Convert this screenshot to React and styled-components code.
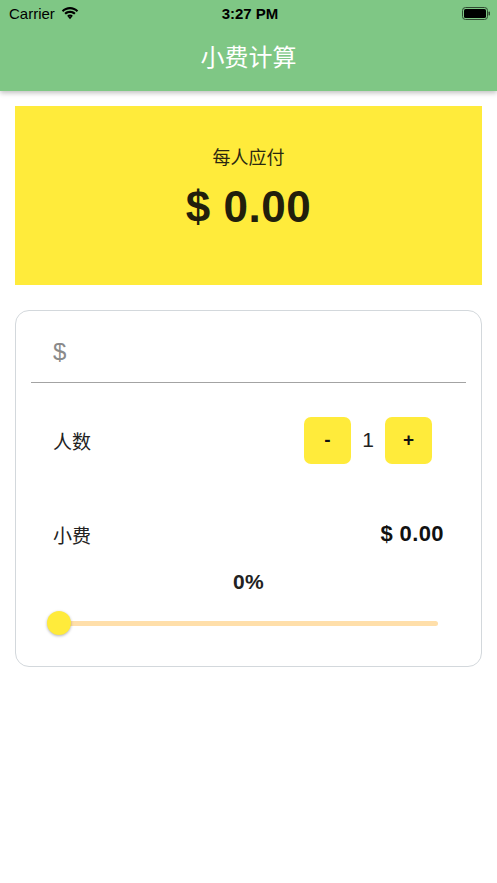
import React, { useState } from "react";
import styled, { createGlobalStyle } from "styled-components";

const GlobalStyle = createGlobalStyle`
  html, body {
    margin: 0;
    padding: 0;
    background: #ffffff;
  }
  body {
    font-family: "Liberation Sans", "Noto Sans CJK SC", sans-serif;
  }
  * {
    box-sizing: border-box;
  }
`;

const Page = styled.div`
  width: 497px;
  min-height: 883px;
  background: #ffffff;
`;

const Header = styled.header`
  background: #7fc785;
  box-shadow: 0 2px 5px rgba(0, 0, 0, 0.25);
  position: relative;
  z-index: 1;
`;

const StatusBar = styled.div`
  height: 26px;
  display: grid;
  grid-template-columns: 1fr auto 1fr;
  align-items: center;
  padding: 0 6px 0 9px;
  color: #000;
  font-size: 15px;
`;

const Carrier = styled.div`
  display: flex;
  align-items: center;
  gap: 6px;
`;

const Clock = styled.div`
  font-weight: bold;
`;

const BatteryWrap = styled.div`
  display: flex;
  justify-content: flex-end;
  align-items: center;
`;

const NavBar = styled.div`
  height: 65px;
  display: flex;
  align-items: center;
  justify-content: center;
  color: #fff;
  font-size: 24px;
  font-family: "Noto Sans CJK SC", sans-serif;
  padding-bottom: 6px;
`;

const Content = styled.main`
  padding: 15px 15px;
  display: flex;
  flex-direction: column;
  gap: 25px;
`;

const Summary = styled.section`
  background: #ffeb3b;
  height: 179px;
  display: flex;
  flex-direction: column;
  align-items: center;
  justify-content: center;
  padding-bottom: 14px;
`;

const SummaryLabel = styled.div`
  font-family: "Noto Sans CJK SC", sans-serif;
  font-size: 18px;
  line-height: 21px;
  color: #2b2810;
  margin-bottom: 14px;
`;

const SummaryAmount = styled.div`
  font-size: 44px;
  line-height: 51px;
  font-weight: bold;
  color: #221f0c;
  letter-spacing: 0.5px;
`;

const Card = styled.section`
  border: 1px solid #d3d8dc;
  border-radius: 14px;
  padding: 0 15px 20px;
  height: 357px;
`;

const InputRow = styled.label`
  display: flex;
  align-items: center;
  height: 72px;
  border-bottom: 1.5px solid #a3a3a3;
  padding: 10px 22px 0;
`;

const Dollar = styled.span`
  font-size: 24px;
  color: #8a8a8a;
  margin-right: 6px;
`;

const AmountInput = styled.input`
  flex: 1;
  border: none;
  outline: none;
  background: transparent;
  font-size: 22px;
  font-family: inherit;
`;

const Row = styled.div`
  display: flex;
  align-items: center;
  justify-content: space-between;
  padding: 0 ${(p) => p.$right || 22}px 0 22px;
  height: ${(p) => p.$height}px;
  margin-top: ${(p) => p.$top || 0}px;
`;

const RowLabel = styled.span`
  font-family: "Noto Sans CJK SC", sans-serif;
  font-size: 19px;
  color: #222;
`;

const Stepper = styled.div`
  display: flex;
  align-items: center;
  gap: 10px;
`;

const StepButton = styled.button`
  width: 47px;
  height: 47px;
  border: none;
  border-radius: 7px;
  background: #ffeb3b;
  font-size: 19px;
  font-weight: bold;
  color: #111;
  font-family: "Liberation Sans", sans-serif;
  cursor: pointer;
  display: flex;
  align-items: center;
  justify-content: center;
`;

const Count = styled.span`
  font-size: 21px;
  color: #222;
  width: 14px;
  text-align: center;
`;

const TipAmount = styled.span`
  font-size: 22px;
  font-weight: bold;
  color: #111;
  letter-spacing: 0.4px;
`;

const Percent = styled.div`
  text-align: center;
  font-size: 21px;
  font-weight: bold;
  color: #222;
  margin-top: 16px;
  letter-spacing: 0.3px;
`;

const SliderWrap = styled.div`
  position: relative;
  margin: 17px 28px 0 28px;
  height: 24px;
  display: flex;
  align-items: center;
`;

const Track = styled.div`
  width: 100%;
  height: 5px;
  border-radius: 3px;
  background: #ffdfaa;
`;

const Thumb = styled.div`
  position: absolute;
  left: -12px;
  top: 0;
  width: 24px;
  height: 24px;
  border-radius: 50%;
  background: #ffeb3b;
  box-shadow: 0 1px 3px rgba(0, 0, 0, 0.3);
`;

const Wifi = () => (
  <svg width="18" height="13" viewBox="0 0 18 13">
    <path d="M9 2.2c2.6 0 5 1 6.8 2.7l1.4-1.5C15 1.3 12.1 0 9 0S3 1.3.8 3.4l1.4 1.5C4 3.2 6.4 2.2 9 2.2z" fill="#000" />
    <path d="M9 5.9c1.6 0 3 .6 4.2 1.6l1.4-1.5C13.1 4.6 11.1 3.8 9 3.8S4.9 4.6 3.4 6l1.4 1.5C6 6.5 7.4 5.9 9 5.9z" fill="#000" />
    <path d="M9 9.5c.7 0 1.3.3 1.7.7L9 12.2 7.3 10.2c.4-.4 1-.7 1.7-.7z" fill="#000" />
    <path d="M9 7.6c1.1 0 2.1.4 2.8 1.1l-1.1 1.5c-.4-.4-1-.7-1.700-.7s-1.3.3-1.7.7L6.2 8.7C6.9 8 7.9 7.6 9 7.6z" fill="#000" />
  </svg>
);

const Battery = () => (
  <svg width="29" height="13" viewBox="0 0 29 13">
    <rect x="0.5" y="0.5" width="25" height="12" rx="3" fill="none" stroke="#2f4a30" />
    <rect x="2" y="2" width="22" height="9" rx="1.6" fill="#000" />
    <rect x="26.5" y="4.5" width="1.5" height="4" rx="0.7" fill="#2f4a30" />
  </svg>
);

const App = () => {
  const [people, setPeople] = useState(1);
  const [bill, setBill] = useState("");

  return (
    <Page>
      <GlobalStyle />
      <Header>
        <StatusBar>
          <Carrier>
            Carrier <Wifi />
          </Carrier>
          <Clock>3:27 PM</Clock>
          <BatteryWrap>
            <Battery />
          </BatteryWrap>
        </StatusBar>
        <NavBar>小费计算</NavBar>
      </Header>

      <Content>
        <Summary>
          <SummaryLabel>每人应付</SummaryLabel>
          <SummaryAmount>$ 0.00</SummaryAmount>
        </Summary>

        <Card>
          <InputRow>
            <Dollar>$</Dollar>
            <AmountInput value={bill} onChange={(e) => setBill(e.target.value)} />
          </InputRow>

          <Row $height={114} $right={34}>
            <RowLabel>人数</RowLabel>
            <Stepper>
              <StepButton onClick={() => setPeople(Math.max(1, people - 1))}>-</StepButton>
              <Count>{people}</Count>
              <StepButton onClick={() => setPeople(people + 1)}>+</StepButton>
            </Stepper>
          </Row>

          <Row $height={40} $top={17}>
            <RowLabel>小费</RowLabel>
            <TipAmount>$ 0.00</TipAmount>
          </Row>

          <Percent>0%</Percent>

          <SliderWrap>
            <Track />
            <Thumb />
          </SliderWrap>
        </Card>
      </Content>
    </Page>
  );
};

export default App;
